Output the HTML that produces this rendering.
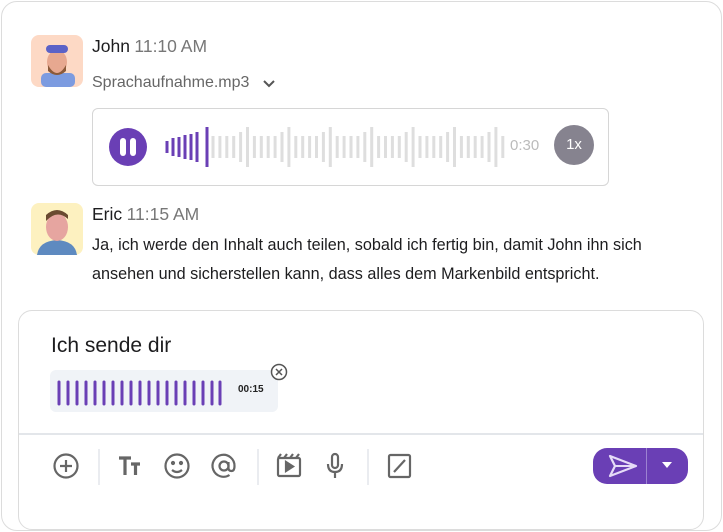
<!DOCTYPE html><html><head><style>
body{margin:0;width:723px;height:532px;background:#fff;font-family:"Liberation Sans",sans-serif;position:relative;overflow:hidden}
.a{position:absolute}
.frame{left:1px;top:1px;width:719px;height:528px;border:1px solid #dcdcdc;border-radius:16px}
.name{font-size:17.5px;color:#1d1d1f}
.time{color:#777;font-size:17.5px}
</style></head><body>
<div class="a frame"></div>
<svg class="a" style="left:31px;top:35px" width="52" height="52"><rect width="52" height="52" rx="8" fill="#fdd9c5"/><rect x="10" y="38" width="34" height="14" rx="5" fill="#7c9be0"/><ellipse cx="26" cy="27" rx="10" ry="12" fill="#e7a890"/><path d="M17 30 Q26 46 35 30 L35 36 Q26 44 17 36Z" fill="#8b5a3a"/><rect x="15" y="10" width="22" height="8" rx="4" fill="#5b62c7"/></svg>
<div class="a" style="left:92px;top:36px"><span class="name">John</span> <span class="time">11:10 AM</span></div>
<div class="a" style="left:92px;top:74px;font-size:16px;color:#666">Sprachaufnahme.mp3</div>
<svg class="a" style="left:261px;top:78px" width="16" height="12"><path d="M3 3l5 5 5-5" stroke="#555" stroke-width="2" fill="none"/></svg>
<div class="a" style="left:92px;top:108px;width:515px;height:76px;border:1.5px solid #d6d6d6;border-radius:6px"></div>
<svg class="a" style="left:108px;top:127px" width="40" height="40"><circle cx="20" cy="20" r="19" fill="#6a3fb5"/><rect x="12" y="11" width="6" height="18" rx="3" fill="#fff"/><rect x="22" y="11" width="6" height="18" rx="3" fill="#fff"/></svg>
<svg class="a" style="left:160px;top:120px" width="350" height="54">
<g stroke-width="3" stroke-linecap="butt">
<g stroke="#6a3fb5"><line x1="7" y1="21" x2="7" y2="33"/><line x1="13" y1="18" x2="13" y2="36"/><line x1="19" y1="17" x2="19" y2="37"/><line x1="25" y1="15" x2="25" y2="39"/><line x1="31" y1="14" x2="31" y2="40"/><line x1="37" y1="12" x2="37" y2="42"/><line x1="47" y1="7" x2="47" y2="47"/></g>
<g stroke="#dedede" id="w"></g>
</g></svg>
<script>
(function(){var g=document.getElementById('w'),p=[22,22,22,22,30,40],s='';var i=0;for(var x=53;x<=343;x+=6.9){var h=p[i%6];i++;s+='<line x1="'+x+'" y1="'+(27-h/2)+'" x2="'+x+'" y2="'+(27+h/2)+'"/>';}g.innerHTML=s;})();
</script>
<div class="a" style="left:510px;top:137px;font-size:15px;color:#bbb">0:30</div>
<div class="a" style="left:554px;top:125px;width:40px;height:40px;border-radius:50%;background:#86838f;color:#fff;font-size:15px;text-align:center;line-height:40px">1x</div>
<svg class="a" style="left:31px;top:203px" width="52" height="52"><rect width="52" height="52" rx="8" fill="#fdf1c0"/><path d="M6 52 Q8 38 26 37 Q44 38 46 52Z" fill="#5e8ac0"/><ellipse cx="26" cy="24" rx="11" ry="14" fill="#e6a5a0"/><path d="M15 18 Q26 6 37 16 L37 12 Q26 2 15 12Z" fill="#6a4a30"/></svg>
<div class="a" style="left:92px;top:204px"><span class="name">Eric</span> <span class="time">11:15 AM</span></div>
<div class="a" style="left:92px;top:231px;width:612px;font-size:16.2px;line-height:28.5px;color:#1d1d1f">Ja, ich werde den Inhalt auch teilen, sobald ich fertig bin, damit John ihn sich ansehen und sicherstellen kann, dass alles dem Markenbild entspricht.</div>
<div class="a" style="left:18px;top:310px;width:684px;height:218px;border:1.5px solid #dcdcdc;border-radius:14px"></div>
<div class="a" style="left:19px;top:433px;width:684px;height:1.5px;background:#e3e6ea"></div>
<div class="a" style="left:51px;top:334px;font-size:21px;color:#1d1d1f">Ich sende dir</div>
<div class="a" style="left:50px;top:370px;width:228px;height:42px;border-radius:6px;background:#f0f3f7"></div>
<svg class="a" style="left:55px;top:380px" width="170" height="26"><g stroke="#6a3fb5" stroke-width="3" stroke-linecap="round">
<line x1="4" y1="2" x2="4" y2="24"/><line x1="13" y1="2" x2="13" y2="24"/><line x1="22" y1="2" x2="22" y2="24"/><line x1="31" y1="2" x2="31" y2="24"/><line x1="40" y1="2" x2="40" y2="24"/><line x1="49" y1="2" x2="49" y2="24"/><line x1="58" y1="2" x2="58" y2="24"/><line x1="67" y1="2" x2="67" y2="24"/><line x1="76" y1="2" x2="76" y2="24"/><line x1="85" y1="2" x2="85" y2="24"/><line x1="94" y1="2" x2="94" y2="24"/><line x1="103" y1="2" x2="103" y2="24"/><line x1="112" y1="2" x2="112" y2="24"/><line x1="121" y1="2" x2="121" y2="24"/><line x1="130" y1="2" x2="130" y2="24"/><line x1="139" y1="2" x2="139" y2="24"/><line x1="148" y1="2" x2="148" y2="24"/><line x1="157" y1="2" x2="157" y2="24"/><line x1="165" y1="2" x2="165" y2="24"/></g></svg>
<div class="a" style="left:238px;top:384px;font-size:10px;font-weight:bold;color:#222">00:15</div>
<svg class="a" style="left:270px;top:363px" width="18" height="18"><circle cx="9" cy="9" r="7.5" fill="#fff" stroke="#555" stroke-width="1.5"/><path d="M6 6l6 6M12 6l-6 6" stroke="#555" stroke-width="1.5"/></svg>
<svg class="a" style="left:40px;top:445px" width="400" height="44" fill="none" stroke="#666" stroke-width="2.2">
<circle cx="26" cy="21" r="11.5"/><path d="M26 15v12M20 21h12"/>
<line x1="59" y1="4" x2="59" y2="40" stroke="#e3e6ea" stroke-width="1.5"/>
<path d="M79 13h12M85 13v17M91 19h9M95.5 19v11" stroke-width="3.2"/>
<circle cx="137" cy="21" r="11.5"/><circle cx="133" cy="18" r="1" fill="#666"/><circle cx="141" cy="18" r="1" fill="#666"/><path d="M132 25q5 4 10 0"/>
<circle cx="184" cy="21" r="4.5"/><path d="M188.5 17v6q0 3 3 3t3-5a11 11 0 1 0-5 9"/>
<line x1="218" y1="4" x2="218" y2="40" stroke="#e3e6ea" stroke-width="1.5"/>
<rect x="238" y="13" width="22" height="18" rx="1.5"/><path d="M238 13l3-4M244 13l3-4M250 13l3-4M256 13l3-4"/><path d="M246 17v9l7-4.5z" fill="#666"/>
<rect x="292" y="9" width="6" height="14" rx="3"/><path d="M288 19q0 8 7 8t7-8M295 27v6"/>
<line x1="328" y1="4" x2="328" y2="40" stroke="#e3e6ea" stroke-width="1.5"/>
<rect x="349" y="10" width="21" height="22" rx="1.5"/><path d="M354 27l11-12"/>
</svg>
<div class="a" style="left:593px;top:448px;width:95px;height:36px;border-radius:14px;background:#6a3fb5"></div>
<div class="a" style="left:646px;top:448px;width:1px;height:36px;background:#9c82d1"></div>
<svg class="a" style="left:608px;top:454px" width="30" height="24"><path d="M2 2L28 12L2 22L7 12Z" fill="none" stroke="#e6dcf7" stroke-width="2.2" stroke-linejoin="round"/><path d="M7 12h20" stroke="#e6dcf7" stroke-width="2"/></svg>
<svg class="a" style="left:660px;top:460px" width="14" height="10"><path d="M2 2h10l-5 6z" fill="#fff"/></svg>
</body></html>
